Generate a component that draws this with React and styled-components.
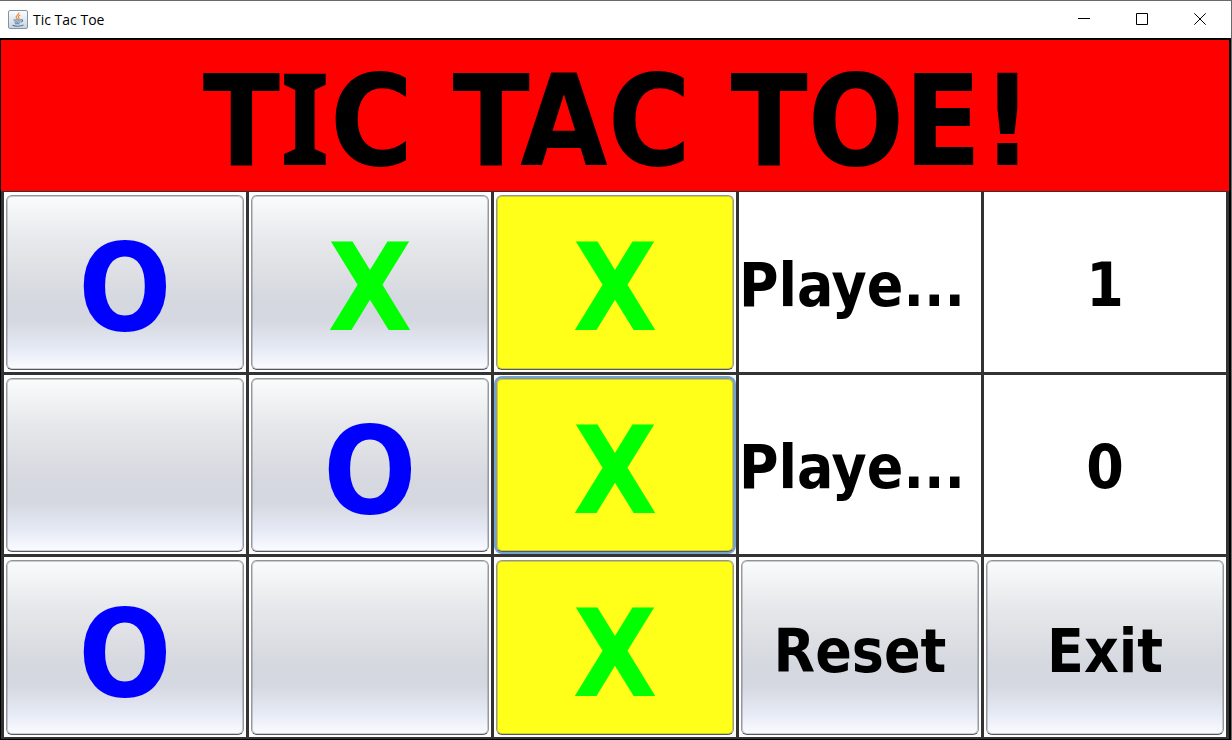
import React from 'react';
import styled, { createGlobalStyle } from 'styled-components';

const GlobalStyle = createGlobalStyle`
  * { box-sizing: border-box; }
  body { margin: 0; background: #000; }
`;

const boardFont = `'DejaVu Sans Condensed', 'Noto Sans', sans-serif`;

const Window = styled.div`
  display: flex;
  flex-direction: column;
  min-height: 100vh;
  background: #000;
  border-top: 1px solid #6b6868;
  border-right: 1px solid #6b6868;
  font-family: ${boardFont};
`;

const TitleBar = styled.header`
  display: flex;
  align-items: center;
  height: 37px;
  padding: 0 2px 0 8px;
  background: #fff;
`;

const WindowName = styled.span`
  flex: 1;
  margin-left: 5px;
  font-family: 'Open Sans', sans-serif;
  font-size: 14px;
  line-height: 20px;
  color: #000;
`;

const WindowControl = styled.button`
  display: flex;
  align-items: center;
  justify-content: center;
  width: 58px;
  height: 36px;
  padding: 0 0 2px;
  border: 0;
  background: transparent;
`;

const Client = styled.main`
  flex: 1;
  display: flex;
  flex-direction: column;
  padding: 2px 2px 1px 1px;
`;

const Banner = styled.h1`
  display: flex;
  align-items: center;
  justify-content: center;
  height: 151px;
  margin: 0;
  padding: 6px 0 0 6px;
  background: #f00;
  color: #000;
  font-size: 126px;
  line-height: 144px;
  font-weight: 700;
  white-space: nowrap;
`;

const SlabLetter = styled.span`
  font-family: 'Noto Sans', sans-serif;
  font-size: 128px;
  font-weight: 700;
`;

const Board = styled.div`
  flex: 1;
  display: grid;
  grid-template-columns: repeat(5, minmax(0, 1fr));
  grid-template-rows: repeat(3, minmax(0, 1fr));
  gap: 3px;
  padding: 1px 3px 2px;
  background: #333;
`;

const Cell = styled.div`
  display: flex;
  align-items: center;
  justify-content: ${p => (p.$start ? 'flex-start' : 'center')};
  padding: ${p => (p.$button ? '3px 2px 2px' : '6px 0 0')};
  overflow: hidden;
  background: #fff;
  color: #000;
  font-size: 60px;
  line-height: 80px;
  font-weight: 700;
  white-space: nowrap;
`;

const GlossyButton = styled.button`
  align-self: stretch;
  flex: 1;
  padding: 6px 0 0;
  border: 1px solid;
  border-color: #909498 #95989d #555860;
  border-radius: 6px;
  background: linear-gradient(#fafbfb 0%, #e6e7ea 28%, #d5d8df 60%, #d5d8e0 72%, #e6eaf5 88%, #fbfcff 100%);
  box-shadow: inset 0 0 0 1px rgba(90, 95, 105, 0.3);
  color: #000;
  font-family: inherit;
  font-size: 60px;
  line-height: 80px;
  font-weight: 700;
`;

const marks = { O: '#0000ff', X: '#00ff00' };

const SquareButton = styled(GlossyButton)`
  padding-top: 12px;
  font-size: 122px;
  line-height: 160px;
  color: ${p => marks[p.$mark] || '#000'};
  ${p => p.$won && 'background: #ffff19;'}
  ${p => p.$focused && 'box-shadow: inset 0 0 0 1px rgba(90, 95, 105, 0.3), 0 0 0 2px #73a4d1;'}
`;

function JavaIcon() {
  return (
    <svg width="20" height="19" viewBox="0 0 20 19" aria-hidden="true">
      <defs>
        <linearGradient id="tile" x1="0" y1="0" x2="0" y2="1">
          <stop offset="0" stopColor="#fdfdfd" />
          <stop offset="1" stopColor="#c9d4e0" />
        </linearGradient>
      </defs>
      <rect x="0.5" y="0.5" width="19" height="18" rx="1.5" fill="url(#tile)" stroke="#8195a9" />
      <path d="M10.8 2.5c.8 2.2-3.5 3-2.6 5 .3.8 1 1.200 1.300 1.800M12.300 5c-2 .8-2.400 1.700-1.500 2.800.4.5.2 1-.3 1.500" fill="none" stroke="#ee8a3a" strokeWidth="1.200" />
      <path d="M5.500 10h7.500M6.300 12h6M7 13.800h4.500M13 9.900c2.200-.6 2.300 1.600-.2 2.300M4.500 15.300c2.300 1.200 8.500 1.200 11-.2" fill="none" stroke="#50799f" strokeWidth="1.100" />
    </svg>
  );
}

function ControlGlyph({ d }) {
  return (
    <svg width="12" height="12" viewBox="0 0 12 12" aria-hidden="true">
      <path d={d} fill="none" stroke="#000" strokeWidth="1" />
    </svg>
  );
}

const controls = [
  ['Minimize', 'M0 5.5H12'],
  ['Maximize', 'M.5 .5H11.500V11.500H.5Z'],
  ['Close', 'M.3 .3L11.700 11.700M11.700 .3L.3 11.700'],
];

function Square({ mark, won, focused }) {
  return (
    <Cell $button>
      <SquareButton type="button" aria-label={mark ? undefined : 'Empty square'} $mark={mark} $won={won} $focused={focused}>
        {mark}
      </SquareButton>
    </Cell>
  );
}

export default function App() {
  return (
    <>
      <GlobalStyle />
      <Window>
        <TitleBar>
          <JavaIcon />
          <WindowName>Tic Tac Toe</WindowName>
          {controls.map(([name, d]) => (
            <WindowControl key={name} type="button" aria-label={name}>
              <ControlGlyph d={d} />
            </WindowControl>
          ))}
        </TitleBar>
        <Client>
          <Banner><span>T<SlabLetter>I</SlabLetter>C TAC TOE!</span></Banner>
          <Board>
            <Square mark="O" />
            <Square mark="X" />
            <Square mark="X" won />
            <Cell $start>Playe...</Cell>
            <Cell>1</Cell>
            <Square />
            <Square mark="O" />
            <Square mark="X" won focused />
            <Cell $start>Playe...</Cell>
            <Cell>0</Cell>
            <Square mark="O" />
            <Square />
            <Square mark="X" won />
            <Cell $button><GlossyButton type="button">Reset</GlossyButton></Cell>
            <Cell $button><GlossyButton type="button">Exit</GlossyButton></Cell>
          </Board>
        </Client>
      </Window>
    </>
  );
}
